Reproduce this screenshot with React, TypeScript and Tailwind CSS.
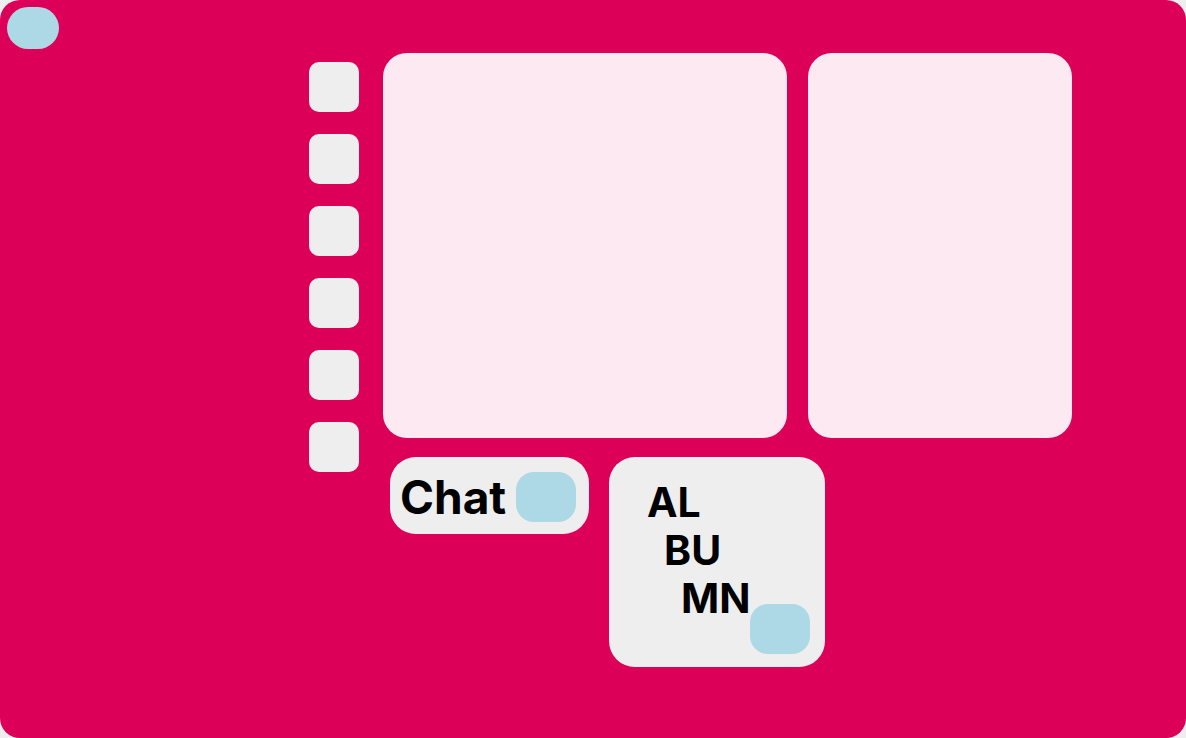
import React from 'react';

const Blob = ({ className = '' }: { className?: string }) => (
  <div className={`bg-[#add8e6] ${className}`}></div>
);

export default function App() {
  const squares = [0, 1, 2, 3, 4, 5];

  return (
    <div className="w-[1186px] h-[738px] bg-[#eeeeee] font-['Inter',sans-serif]">
      <div className="w-full h-full bg-[#dc0059] rounded-[20px] overflow-hidden">
        {/* corner toggle */}
        <Blob className="ml-[7px] mt-[7px] w-[52px] h-[42px] rounded-[21px]" />

        <div className="flex ml-[309px] mt-[4px]">
          {/* side squares */}
          <div className="flex flex-col gap-[22px] pt-[9px]">
            {squares.map((i) => (
              <div key={i} className="w-[50px] h-[50px] rounded-[10px] bg-[#eeeeee]"></div>
            ))}
          </div>

          <div className="flex flex-col ml-[24px]">
            <div className="flex gap-[21px]">
              <div className="w-[404px] h-[385px] rounded-[24px] bg-[#fde9f1]"></div>
              <div className="w-[264px] h-[385px] rounded-[24px] bg-[#fde9f1]"></div>
            </div>

            <div className="flex items-start mt-[19px] ml-[7px] gap-[20px]">
              <div className="flex items-center w-[199px] h-[77px] rounded-[26px] bg-[#eeeeee] pl-[10px]">
                <span className="mt-[2px] text-[46px] leading-[48px] font-bold text-black">Chat</span>
                <Blob className="ml-[10px] mt-[3px] w-[60px] h-[50px] rounded-[18px]" />
              </div>

              <div className="w-[216px] h-[210px] rounded-[26px] bg-[#eeeeee] pt-[21px] pl-[38px] text-[41px] leading-[48px] font-bold text-black">
                <div>AL</div>
                <div className="ml-[17px]">BU</div>
                <div className="flex items-start ml-[34px]">
                  <span>MN</span>
                  <Blob className="ml-[0px] mt-[30px] w-[60px] h-[50px] rounded-[18px]" />
                </div>
              </div>
            </div>
          </div>
        </div>
      </div>
    </div>
  );
}
